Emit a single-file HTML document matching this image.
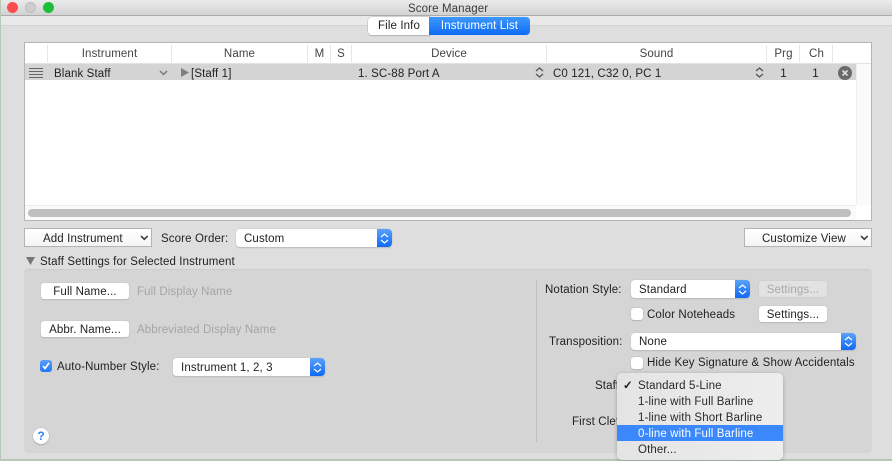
<!DOCTYPE html>
<html><head><meta charset="utf-8">
<style>
html,body{margin:0;padding:0}
body{width:892px;height:461px;overflow:hidden;position:relative;background:#dedede;font-family:"Liberation Sans",sans-serif;font-size:11.5px;letter-spacing:.12px;color:#222}
div,span{position:absolute;white-space:nowrap;box-sizing:border-box}
.t{line-height:16px;height:14px}
.btn{background:#fff;border-radius:3px;box-shadow:0 0 0 .5px #c8c8c8,0 1px 1px #aaa;text-align:center;line-height:18px;height:16px}
.pop{background:#fff;border-radius:4px;box-shadow:0 0 0 .5px #c8c8c8,0 1px 1px #aaa;height:18px;line-height:20px;padding-left:8px}
.ar{position:absolute;right:0;top:0;width:15px;height:100%;background:linear-gradient(#5aa2fb,#1069f5);border-radius:0 4px 4px 0}
.ar svg{position:absolute;left:3px;top:50%;margin-top:-5.500px}
.sq{background:#fff;border:1px solid #b4b4b4;height:19px;line-height:20px}
.h{color:#444;text-align:center;top:46px}
.sep{width:1px;background:#e6e6e6;top:45px;height:17px}
.cb{width:12px;height:12px;background:#fff;border-radius:3px;box-shadow:0 0 0 .5px #bbb,0 1px 1px #b0b0b0}
.m{left:638px;line-height:18px;height:16px;color:#2a2a2a}
</style></head><body>
<div style="left:0;top:0;width:1px;height:461px;background:#b9c9b9"></div>
<div style="left:0;top:459px;width:892px;height:2px;background:#b7c8b7"></div>
<!-- title bar -->
<div style="left:1px;top:0;width:891px;height:16px;background:linear-gradient(#ebebeb,#d2d2d2);border-bottom:1px solid #ababab"></div>
<div style="left:7px;top:2px;width:11px;height:11px;border-radius:50%;background:#fc4e4c"></div>
<div style="left:25px;top:2px;width:11px;height:11px;border-radius:50%;background:#cdcdcd;border:1px solid #bdbdbd"></div>
<div style="left:43px;top:2px;width:11px;height:11px;border-radius:50%;background:#1dbe39"></div>
<div class="t" style="left:408px;top:1px;color:#3a3a3a">Score Manager</div>
<div style="left:1px;top:16px;width:891px;height:10px;background:#e9e9e9;border-bottom:1px solid #d3d3d3"></div>
<!-- tabs -->
<div style="left:368px;top:17px;width:62px;height:18px;background:#fff;border-radius:4px 0 0 4px;box-shadow:0 0 0 .5px #bbb,0 1px 1px #aaa;text-align:center;line-height:19px;color:#222">File Info</div>
<div style="left:429px;top:17px;width:101px;height:18px;background:linear-gradient(#3d98fb,#0f6bf6);border-radius:0 4px 4px 0;text-align:center;line-height:19px;color:#fff">Instrument List</div>
<!-- table -->
<div style="left:24px;top:42px;width:848px;height:179px;background:#fff;border:1px solid #b5b5b5;border-bottom:1px solid #b5b5b5"></div>
<div class="sep" style="left:47px"></div><div class="sep" style="left:171px"></div><div class="sep" style="left:307px"></div><div class="sep" style="left:330px"></div><div class="sep" style="left:351px"></div><div class="sep" style="left:546px"></div><div class="sep" style="left:766px"></div><div class="sep" style="left:799px"></div><div class="sep" style="left:832px"></div>
<div class="t h" style="left:47px;width:125px">Instrument</div>
<div class="t h" style="left:171px;width:137px">Name</div>
<div class="t h" style="left:308px;width:23px">M</div>
<div class="t h" style="left:331px;width:20px">S</div>
<div class="t h" style="left:351px;width:196px">Device</div>
<div class="t h" style="left:546px;width:221px">Sound</div>
<div class="t h" style="left:767px;width:33px">Prg</div>
<div class="t h" style="left:800px;width:33px">Ch</div>
<!-- row -->
<div style="left:25px;top:64px;width:831px;height:16px;background:#d4d4d4"></div>
<div style="left:25px;top:63px;width:846px;height:1px;background:#e2e2e2"></div>
<div style="left:856px;top:64px;width:15px;height:141px;background:#fafafa;border-left:1px solid #f0f0f0"></div>
<svg style="position:absolute;left:29px;top:67px" width="15" height="12"><path d="M0 1.500h14M0 4.500h14M0 7.500h14M0 10.500h14" stroke="#666" stroke-width="1"/></svg>
<div class="t" style="left:54px;top:66px">Blank Staff</div>
<svg style="position:absolute;left:159px;top:70px" width="10" height="7"><path d="M1 1l3.500 3.500L8 1" fill="none" stroke="#777" stroke-width="1.500"/></svg>
<svg style="position:absolute;left:181px;top:68px" width="9" height="10"><path d="M0 0l8 4.500L0 9z" fill="#7f7f7f"/></svg>
<div class="t" style="left:191px;top:66px">[Staff 1]</div>
<div class="t" style="left:358px;top:66px">1. SC-88 Port A</div>
<svg style="position:absolute;left:535px;top:67px" width="9" height="11"><path d="M1 4l3.500-3L8 4M1 7l3.500 3L8 7" fill="none" stroke="#555" stroke-width="1.300"/></svg>
<div class="t" style="left:553px;top:66px">C0 121, C32 0, PC 1</div>
<svg style="position:absolute;left:755px;top:67px" width="9" height="11"><path d="M1 4l3.500-3L8 4M1 7l3.500 3L8 7" fill="none" stroke="#555" stroke-width="1.300"/></svg>
<div class="t" style="left:767px;top:66px;width:33px;text-align:center">1</div>
<div class="t" style="left:800px;top:66px;width:31px;text-align:center">1</div>
<svg style="position:absolute;left:838px;top:66px" width="14" height="14"><circle cx="7" cy="7" r="7" fill="#6a6a6a"/><path d="M4.500 4.500l5 5M9.500 4.500l-5 5" stroke="#ddd" stroke-width="1.600"/></svg>
<!-- scrollbar -->
<div style="left:25px;top:205px;width:831px;height:15px;background:#fafafa;border-top:1px solid #ececec"></div>
<div style="left:28px;top:209px;width:823px;height:8px;border-radius:4px;background:#bfbfbf"></div>
<!-- buttons row -->
<div class="sq" style="left:24px;top:228px;width:128px;padding-left:18px;background:linear-gradient(#fff,#f4f4f4)">Add Instrument</div>
<svg style="position:absolute;left:140px;top:235px" width="9" height="7"><path d="M1 1l3.300 3.300L7.600 1" fill="none" stroke="#333" stroke-width="1.500"/></svg>
<div class="t" style="left:161px;top:231px">Score Order:</div>
<div class="pop" style="left:236px;top:229px;width:156px;">Custom<span class="ar"><svg width="9" height="11"><path d="M1 4l3.500-3L8 4M1 7l3.500 3L8 7" fill="none" stroke="#fff" stroke-width="1.200"/></svg></span></div>
<div class="sq" style="left:744px;top:228px;width:128px;padding-left:17px;background:linear-gradient(#fff,#f4f4f4)">Customize View</div>
<svg style="position:absolute;left:860px;top:235px" width="9" height="7"><path d="M1 1l3.300 3.300L7.600 1" fill="none" stroke="#333" stroke-width="1.500"/></svg>
<svg style="position:absolute;left:26px;top:257px" width="10" height="8"><path d="M0 0h9L4.500 8z" fill="#777"/></svg>
<div class="t" style="left:40px;top:254px">Staff Settings for Selected Instrument</div>
<!-- panel -->
<div style="left:24px;top:269px;width:848px;height:184px;background:#d5d5d5;border-radius:4px;border-top:1px solid #cdcdcd"></div>
<div style="left:536px;top:280px;width:1px;height:162px;background:#bdbdbd"></div>
<div class="btn" style="left:41px;top:283px;width:88px">Full Name...</div>
<div class="t" style="left:137px;top:284px;color:#a5a5a5">Full Display Name</div>
<div class="btn" style="left:41px;top:321px;width:88px">Abbr. Name...</div>
<div class="t" style="left:137px;top:322px;color:#a5a5a5">Abbreviated Display Name</div>
<div class="cb" style="left:40px;top:360px;background:linear-gradient(#5aa2fb,#1f74f5);box-shadow:none"><svg style="position:absolute;left:1px;top:1px" width="10" height="10"><path d="M2 5l2 2.500L8 2" fill="none" stroke="#fff" stroke-width="1.700"/></svg></div>
<div class="t" style="left:57px;top:359px">Auto-Number Style:</div>
<div class="pop" style="left:173px;top:358px;width:152px;">Instrument 1, 2, 3<span class="ar"><svg width="9" height="11"><path d="M1 4l3.500-3L8 4M1 7l3.500 3L8 7" fill="none" stroke="#fff" stroke-width="1.200"/></svg></span></div>
<div style="left:33px;top:428px;width:16px;height:16px;border-radius:50%;background:#fff;box-shadow:0 0 0 .5px #bbb,0 1px 1px #999;text-align:center;color:#2f86f7;font-weight:bold;font-size:12px;line-height:16px;letter-spacing:0">?</div>
<!-- right column -->
<div class="t" style="left:545px;top:282px">Notation Style:</div>
<div class="pop" style="left:631px;top:280px;width:119px;">Standard<span class="ar"><svg width="9" height="11"><path d="M1 4l3.500-3L8 4M1 7l3.500 3L8 7" fill="none" stroke="#fff" stroke-width="1.200"/></svg></span></div>
<div class="btn" style="left:759px;top:281px;width:68px;height:16px;background:#e2e2e2;color:#a8a8a8;box-shadow:0 0 0 .5px #ccc">Settings...</div>
<div class="cb" style="left:631px;top:308px"></div>
<div class="t" style="left:647px;top:307px">Color Noteheads</div>
<div class="btn" style="left:759px;top:306px;width:68px">Settings...</div>
<div class="t" style="left:549px;top:334px">Transposition:</div>
<div class="pop" style="left:631px;top:333px;width:225px;height:17px;line-height:18px">None<span class="ar"><svg width="9" height="11"><path d="M1 4l3.500-3L8 4M1 7l3.500 3L8 7" fill="none" stroke="#fff" stroke-width="1.200"/></svg></span></div>
<div class="cb" style="left:631px;top:357px"></div>
<div class="t" style="left:647px;top:355px">Hide Key Signature &amp; Show Accidentals</div>
<div class="t" style="left:595px;top:378px">Staff</div>
<div class="t" style="left:572px;top:414px">First Clef</div>
<!-- menu -->
<div style="left:617px;top:373px;width:166px;height:87px;background:linear-gradient(90deg,#e4e4e4,#ededed);border-radius:5px;box-shadow:0 1px 4px rgba(0,0,0,.25)"></div>
<div style="left:617px;top:425px;width:166px;height:16px;background:#3a88fb"></div>
<div class="t" style="left:623px;top:378px;font-weight:bold">✓</div>
<div class="m" style="top:377px">Standard 5-Line</div>
<div class="m" style="top:393px">1-line with Full Barline</div>
<div class="m" style="top:409px">1-line with Short Barline</div>
<div class="m" style="top:425px;color:#fff">0-line with Full Barline</div>
<div class="m" style="top:441px">Other...</div>
</body></html>
